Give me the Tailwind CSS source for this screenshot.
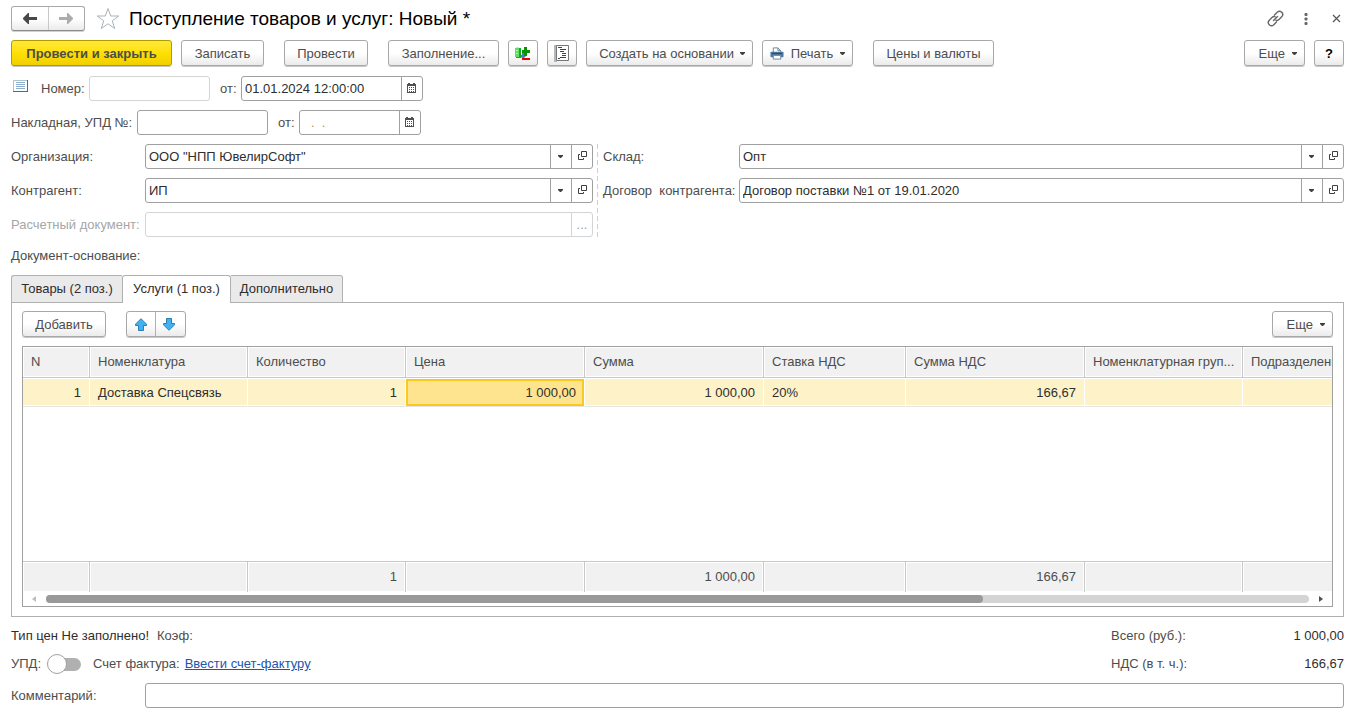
<!DOCTYPE html>
<html lang="ru">
<head>
<meta charset="utf-8">
<meta name="viewport" content="width=device-width, initial-scale=1">
<title>Поступление товаров и услуг: Новый *</title>
<script src="https://cdn.jsdelivr.net/npm/@tailwindcss/browser@4"></script>
</head>
<body class="bg-white font-['Liberation_Sans',Arial,sans-serif] text-[13px] leading-5 text-[#4d4d4d]">
<svg class="hidden" aria-hidden="true">
  <symbol id="caret" viewBox="0 0 5 3"><path d="M0 0h5v1L3 3H2L0 1z" fill="#404040"/></symbol>
  <symbol id="open" viewBox="0 0 9 9"><path d="M3.500.5h5v5h-5zM2 3.500H.5v5h5V7" fill="none" stroke="#404040"/></symbol>
  <symbol id="calendar" viewBox="0 0 9 10"><path d="M1 0h2v1h3V0h2v1h1v9H0V1h1z" fill="#505050"/><path d="M1 3h7v6H1z" fill="#fff"/><path d="M2 4h1v1H2zM4 4h1v1H4zM6 4h1v1H6zM2 6h1v1H2zM4 6h1v1H4zM6 6h1v1H6zM2 8h1v1H2zM4 8h1v1H4zM6 8h1v1H6z" fill="#505050"/></symbol>
</svg>
<main class="flex min-h-screen flex-col gap-[9px] pt-[6px] pr-[17px] pb-[10px] pl-[11px]">
  <header class="flex h-[25px] items-center">
    <div class="flex h-[25px] w-[74px] rounded-[3px] border border-[#a8a8a8] border-b-[#8c8c8c] bg-linear-to-b from-white from-50% to-[#ebebeb] shadow-[0_1px_0_#d0d0d0]">
      <button type="button" aria-label="Назад" class="flex flex-1 items-center justify-center border-r border-[#c8c8c8]"><svg width="14" height="11" viewBox="0 0 14 11"><path d="M6 0v4h8v3H6v4H5L0 6V5l5-5z" fill="#484848"/></svg></button>
      <button type="button" aria-label="Вперед" class="flex flex-1 items-center justify-center"><svg width="14" height="11" viewBox="0 0 14 11"><path d="M8 0v4H0v3h8v4h1l5-5V5L9 0z" fill="#acacac"/></svg></button>
    </div>
    <button type="button" aria-label="В избранное" class="ml-[11px]"><svg width="24" height="23" viewBox="0 0 24 23"><path d="M12 1.500l2.700 7.500h8l-6.400 4.800 2.400 7.700-6.700-4.700-6.700 4.700 2.400-7.700L1.300 9h8z" fill="#fff" stroke="#a9b1b8"/></svg></button>
    <h1 class="ml-[9px] flex-1 truncate text-[19px] leading-6 text-black">Поступление товаров и услуг: Новый *</h1>
    <div class="flex items-center pr-[3px]">
      <button type="button" aria-label="Ссылка"><svg width="17" height="17" viewBox="0 0 17 17" fill="none" stroke="#666" stroke-width="1.400" stroke-linecap="round"><path d="M7.500 5l2.700-2.700a3.100 3.100 0 0 1 4.500 4.500L12 9.500a3 3 0 0 1-3 .8M9.500 12L6.800 14.700a3.100 3.100 0 0 1-4.500-4.500L5 7.500a3 3 0 0 1 3-.8M6.500 10.500l4-4"/></svg></button>
      <button type="button" aria-label="Меню" class="ml-[20px]"><svg width="4" height="12" viewBox="0 0 4 12" fill="#666"><rect x=".5" y="0" width="3" height="3" rx="1"/><rect x=".5" y="4.500" width="3" height="3" rx="1"/><rect x=".5" y="9" width="3" height="3" rx="1"/></svg></button>
      <button type="button" aria-label="Закрыть" class="ml-[24px]"><svg width="9" height="9" viewBox="0 0 9 9"><path d="M1 1l7 7M8 1L1 8" stroke="#555" stroke-width="1.200"/></svg></button>
    </div>
  </header>

  <div role="toolbar" class="flex h-[27px] items-start whitespace-nowrap *:h-[26px] *:shrink-0 *:rounded-[3px] *:border *:pt-px *:shadow-[0_1px_0_#c8c8c8]">
    <button type="button" class="w-[161px] border-[#b09b00] bg-linear-to-b from-[#ffe935] via-[#ffe000] to-[#f0cf00] font-bold">Провести и закрыть</button>
    <button type="button" class="ml-[9px] w-[83px] border-[#a8a8a8] bg-linear-to-b from-white from-50% to-[#ebebeb]">Записать</button>
    <button type="button" class="ml-[20px] w-[84px] border-[#a8a8a8] bg-linear-to-b from-white from-50% to-[#ebebeb]">Провести</button>
    <button type="button" class="ml-[20px] w-[111px] border-[#a8a8a8] bg-linear-to-b from-white from-50% to-[#ebebeb]">Заполнение...</button>
    <button type="button" aria-label="Изменить строки" class="ml-[9px] flex w-[30px] items-center justify-center border-[#a8a8a8] bg-linear-to-b from-white from-50% to-[#ebebeb]"><svg width="16" height="16" viewBox="0 0 16 16"><path d="M0 2h5v9H0z" fill="#62df62"/><path d="M1 1h3v1H1zM1 4h2v1H1zM1 7h2v1H1z" fill="#b5f5b5"/><path d="M4 2h2v10H1v-1h3z" fill="#12a92c"/><path d="M9 1h3v3h3v3h-3v3H9V7H7V4h2z" fill="#079407"/><path d="M7 7v2H6v2l2 2 3-3H9V7z" fill="#3c83c4"/><path d="M7 12h8v2H7z" fill="#f00000"/></svg></button>
    <button type="button" aria-label="Журнал проводок" class="ml-[9px] flex w-[30px] items-center justify-center border-[#a8a8a8] bg-linear-to-b from-white from-50% to-[#ebebeb]"><svg width="16" height="17" viewBox="0 0 16 17"><path d="M0 0h3v17H0z" fill="#b8b8b8"/><path d="M2.500.5h12v15h-12z" fill="#fff" stroke="#777"/><path d="M4 2h4v1H4zM6 4h6v1H6zM6 6h4v1H6zM8 8h4v1H8zM8 10h4v1H8zM6 12h6v1H6zM4 13h2v1H4z" fill="#244e68"/></svg></button>
    <button type="button" class="ml-[9px] flex w-[167px] items-center justify-end border-[#a8a8a8] bg-linear-to-b from-white from-50% to-[#ebebeb] pr-[7px]">Создать на основании<svg class="ml-[6px]" width="5" height="3"><use href="#caret"/></svg></button>
    <button type="button" class="ml-[9px] flex w-[91px] items-center border-[#a8a8a8] bg-linear-to-b from-white from-50% to-[#ebebeb] px-[7px]"><svg width="14" height="15" viewBox="0 0 15 15"><path d="M3.500 6V1.500h5l3 3V6" fill="#fff" stroke="#66829c"/><path d="M8.500 1.500v3h3" fill="none" stroke="#66829c"/><rect x=".5" y="5.500" width="14" height="6" rx="1" fill="#4f779c"/><path d="M2 7h11v1H2z" fill="#244a6b"/><path d="M3.500 9.500h8v4h-8z" fill="#fff" stroke="#66829c"/></svg><span class="flex-1 text-center">Печать</span><svg width="5" height="3"><use href="#caret"/></svg></button>
    <button type="button" class="ml-[20px] w-[121px] border-[#a8a8a8] bg-linear-to-b from-white from-50% to-[#ebebeb]">Цены и валюты</button>
    <button type="button" class="ml-auto flex w-[61px] items-center justify-end border-[#a8a8a8] bg-linear-to-b from-white from-50% to-[#ebebeb] pr-[7px]">Еще<svg class="ml-[7px]" width="5" height="3"><use href="#caret"/></svg></button>
    <button type="button" aria-label="Справка" class="ml-[9px] w-[30px] border-[#a8a8a8] bg-linear-to-b from-white from-50% to-[#ebebeb] font-bold text-black">?</button>
  </div>

  <div class="flex h-[25px] items-center">
    <svg class="mb-[6px] ml-[2px]" width="16" height="12" viewBox="0 0 16 12"><path d="M.5.500h14v11H.5z" fill="#fff" stroke="#a9c3d0"/><path d="M14 0h1v12H0v-1h14z" fill="#46736f"/><path d="M3 2h9v1H3zM3 4h9v1H3zM3 6h9v1H3zM3 8h9v1H3z" fill="#8eaed0"/></svg>
    <label for="number" class="ml-[12px] w-[48px]">Номер:</label>
    <input id="number" type="text" class="h-[25px] w-[121px] rounded-[3px] border border-[#d4d4d4] px-[3px] outline-none">
    <label for="date" class="ml-[10px] w-[21px]">от:</label>
    <div class="flex h-[25px] w-[182px] rounded-[3px] border border-[#a0a0a0]">
      <input id="date" type="text" value="01.01.2024 12:00:00" class="min-w-0 flex-1 px-[3px] text-[#2e2e2e] outline-none">
      <button type="button" aria-label="Выбрать дату" class="flex w-[21px] items-center justify-center border-l border-[#a0a0a0] pr-px pb-[2px]"><svg width="9" height="10"><use href="#calendar"/></svg></button>
    </div>
  </div>

  <div class="flex h-[25px] items-center">
    <label for="invoice" class="w-[126px] whitespace-nowrap">Накладная, УПД №:</label>
    <input id="invoice" type="text" class="h-[25px] w-[131px] rounded-[3px] border border-[#a0a0a0] px-[3px] outline-none">
    <label for="invoice-date" class="ml-[10px] w-[21px]">от:</label>
    <div class="flex h-[25px] w-[122px] rounded-[3px] border border-[#a0a0a0]">
      <input id="invoice-date" type="text" value=".  ." class="min-w-0 flex-1 pl-[11px] text-[#c98a4b] outline-none">
      <button type="button" aria-label="Выбрать дату накладной" class="flex w-[21px] items-center justify-center border-l border-[#a0a0a0] pr-px pb-[2px]"><svg width="9" height="10"><use href="#calendar"/></svg></button>
    </div>
  </div>

  <div class="grid grid-cols-[134px_448fr_10px_136px_605fr] items-center gap-y-[9px]">
    <label for="org">Организация:</label>
    <div class="flex h-[25px] min-w-0 rounded-[3px] border border-[#a0a0a0]">
      <div class="relative min-w-0 flex-1">
        <select id="org" class="h-full w-full appearance-none pr-[24px] pl-[3px] text-[#2e2e2e] outline-none"><option>ООО "НПП ЮвелирСофт"</option></select>
        <span class="pointer-events-none absolute inset-y-0 right-0 flex w-[21px] items-center justify-center border-l border-[#a0a0a0] pr-px"><svg width="5" height="3"><use href="#caret"/></svg></span>
      </div>
      <button type="button" aria-label="Открыть организацию" class="flex w-[21px] items-center justify-center border-l border-[#a0a0a0] pb-[2px]"><svg width="9" height="9"><use href="#open"/></svg></button>
    </div>
    <div class="col-start-3 row-span-3 row-start-1 ml-[4px] h-full w-px bg-[repeating-linear-gradient(to_bottom,#cfcfcf_0_5px,transparent_5px_8px)]"></div>
    <label for="store">Склад:</label>
    <div class="flex h-[25px] min-w-0 rounded-[3px] border border-[#a0a0a0]">
      <div class="relative min-w-0 flex-1">
        <select id="store" class="h-full w-full appearance-none pr-[24px] pl-[3px] text-[#2e2e2e] outline-none"><option>Опт</option></select>
        <span class="pointer-events-none absolute inset-y-0 right-0 flex w-[21px] items-center justify-center border-l border-[#a0a0a0] pr-px"><svg width="5" height="3"><use href="#caret"/></svg></span>
      </div>
      <button type="button" aria-label="Открыть склад" class="flex w-[21px] items-center justify-center border-l border-[#a0a0a0] pb-[2px]"><svg width="9" height="9"><use href="#open"/></svg></button>
    </div>

    <label for="partner">Контрагент:</label>
    <div class="flex h-[25px] min-w-0 rounded-[3px] border border-[#a0a0a0]">
      <div class="relative min-w-0 flex-1">
        <select id="partner" class="h-full w-full appearance-none pr-[24px] pl-[3px] text-[#2e2e2e] outline-none"><option>ИП</option></select>
        <span class="pointer-events-none absolute inset-y-0 right-0 flex w-[21px] items-center justify-center border-l border-[#a0a0a0] pr-px"><svg width="5" height="3"><use href="#caret"/></svg></span>
      </div>
      <button type="button" aria-label="Открыть контрагента" class="flex w-[21px] items-center justify-center border-l border-[#a0a0a0] pb-[2px]"><svg width="9" height="9"><use href="#open"/></svg></button>
    </div>
    <label for="contract" class="whitespace-nowrap">Договор&nbsp; контрагента:</label>
    <div class="flex h-[25px] min-w-0 rounded-[3px] border border-[#a0a0a0]">
      <div class="relative min-w-0 flex-1">
        <select id="contract" class="h-full w-full appearance-none pr-[24px] pl-[3px] text-[#2e2e2e] outline-none"><option>Договор поставки №1 от 19.01.2020</option></select>
        <span class="pointer-events-none absolute inset-y-0 right-0 flex w-[21px] items-center justify-center border-l border-[#a0a0a0] pr-px"><svg width="5" height="3"><use href="#caret"/></svg></span>
      </div>
      <button type="button" aria-label="Открыть договор" class="flex w-[21px] items-center justify-center border-l border-[#a0a0a0] pb-[2px]"><svg width="9" height="9"><use href="#open"/></svg></button>
    </div>

    <label for="payment-doc" class="whitespace-nowrap text-[#a6a6a6]">Расчетный документ:</label>
    <div class="flex h-[25px] min-w-0 rounded-[3px] border border-[#d4d4d4]">
      <input id="payment-doc" type="text" disabled class="min-w-0 flex-1 px-[3px]">
      <button type="button" disabled aria-label="Выбрать расчетный документ" class="w-[21px] border-l border-[#d4d4d4] text-[#a0a0a0]">...</button>
    </div>
  </div>

  <div>Документ-основание:</div>

  <section class="flex flex-1 flex-col">
    <div role="tablist" class="z-10 -mb-px flex h-[28px] whitespace-nowrap text-[#2e2e2e]">
      <button type="button" role="tab" aria-selected="false" class="w-[111px] rounded-tl-[3px] border border-r-0 border-[#b0b0b0] bg-[#eaeaea]">Товары (2 поз.)</button>
      <button type="button" role="tab" aria-selected="true" class="w-[109px] rounded-t-[3px] border border-b-0 border-[#b0b0b0] bg-white pb-px">Услуги (1 поз.)</button>
      <button type="button" role="tab" aria-selected="false" class="w-[112px] rounded-tr-[3px] border border-l-0 border-[#b0b0b0] bg-[#eaeaea]">Дополнительно</button>
    </div>
    <div role="tabpanel" class="flex flex-1 flex-col gap-[8px] border border-[#b0b0b0] px-[10px] pt-[8px] pb-[9px]">
      <div class="flex h-[27px] items-start">
        <button type="button" class="h-[26px] w-[84px] rounded-[3px] border border-[#a8a8a8] bg-linear-to-b from-white from-50% to-[#ebebeb] pt-px shadow-[0_1px_0_#c8c8c8]">Добавить</button>
        <div class="ml-[20px] flex h-[26px] w-[60px] rounded-[3px] border border-[#a8a8a8] bg-linear-to-b from-white from-50% to-[#ebebeb] shadow-[0_1px_0_#c8c8c8]">
          <button type="button" aria-label="Переместить вверх" class="flex flex-1 items-center justify-center border-r border-[#b0b0b0]"><svg width="12" height="13" viewBox="0 0 12 13"><path d="M6 .7L11.500 6.200v1.300H8.500v5h-5v-5H.5V6.200z" fill="#43b0f0" stroke="#2b7db5" stroke-linejoin="round"/></svg></button>
          <button type="button" aria-label="Переместить вниз" class="flex flex-1 items-center justify-center pr-[2px]"><svg width="12" height="13" viewBox="0 0 12 13"><path d="M6 12.300L.5 6.800V5.500h3v-5h5v5h3v1.300z" fill="#43b0f0" stroke="#2b7db5" stroke-linejoin="round"/></svg></button>
        </div>
        <button type="button" class="ml-auto flex h-[26px] w-[61px] items-center justify-end rounded-[3px] border border-[#a8a8a8] bg-linear-to-b from-white from-50% to-[#ebebeb] pt-px pr-[7px] shadow-[0_1px_0_#c8c8c8]">Еще<svg class="ml-[7px]" width="5" height="3"><use href="#caret"/></svg></button>
      </div>
      <div class="flex flex-1 flex-col border border-[#a0a0a0]">
        <div class="grid flex-1 overflow-hidden">
          <table class="h-full w-[1379px] table-fixed border-separate border-spacing-0 text-left">
            <colgroup><col class="w-[67px]"><col class="w-[158px]"><col class="w-[158px]"><col class="w-[179px]"><col class="w-[179px]"><col class="w-[142px]"><col class="w-[179px]"><col class="w-[158px]"><col class="w-[159px]"></colgroup>
            <thead>
              <tr class="h-[31px] *:truncate *:border-r *:border-b *:border-[#c8c8c8] *:bg-[#f1f1f1] *:pr-[2px] *:pl-[8px] *:font-normal *:shadow-[inset_0_0_0_1px_#fff]">
                <th scope="col">N</th><th scope="col">Номенклатура</th><th scope="col">Количество</th><th scope="col">Цена</th><th scope="col">Сумма</th><th scope="col">Ставка НДС</th><th scope="col">Сумма НДС</th><th scope="col">Номенклатурная груп...</th><th scope="col">Подразделение</th>
              </tr>
            </thead>
            <tbody>
              <tr class="h-[29px] text-[#2e2e2e] *:border-t *:border-r *:border-b *:border-t-white *:border-r-white *:border-b-[#e4e4e4] *:bg-[#fdf2c8] *:px-[8px] *:shadow-[inset_0_-1px_0_#fff]">
                <td class="text-right">1</td><td>Доставка Спецсвязь</td><td class="text-right">1</td>
                <td><div class="-mx-[8px] flex h-[27px] items-center justify-end border-2 border-[#fcc820] bg-[#ffe48f] pr-[6px]">1 000,00</div></td>
                <td class="text-right">1 000,00</td><td>20%</td><td class="text-right">166,67</td><td></td><td></td>
              </tr>
              <tr><td colspan="9"></td></tr>
            </tbody>
            <tfoot>
              <tr class="h-[31px] text-right *:border-t *:border-r *:border-[#c8c8c8] *:bg-[#f1f1f1] *:px-[8px] *:shadow-[inset_0_0_0_1px_#fff]">
                <td></td><td></td><td>1</td><td></td><td>1 000,00</td><td></td><td>166,67</td><td></td><td></td>
              </tr>
            </tfoot>
          </table>
        </div>
        <div class="flex h-[14px] items-center pr-[9px] pl-[9px]">
          <svg width="4" height="6" viewBox="0 0 4 6"><path d="M4 0v6L0 3z" fill="#bdbdbd"/></svg>
          <div class="mx-[10px] h-[8px] flex-1 rounded-full bg-[#d4d4d4]"><div class="h-full rounded-full bg-[#999]" style="width:74.2%"></div></div>
          <svg width="4" height="6" viewBox="0 0 4 6"><path d="M0 0v6l4-3z" fill="#505050"/></svg>
        </div>
      </div>
    </div>
  </section>

  <div class="flex h-[19px] items-center">
    <span class="text-[#2e2e2e]">Тип цен Не заполнено!</span>
    <span class="ml-[8px]">Коэф:</span>
    <span class="ml-auto w-[150px]">Всего (руб.):</span>
    <span class="w-[83px] text-right text-[#2e2e2e]">1 000,00</span>
  </div>
  <div class="flex h-[20px] items-center">
    <label for="upd" class="w-[36px]">УПД:</label>
    <span class="relative flex h-[20px] w-[34px] items-center">
      <input id="upd" type="checkbox" role="switch" class="peer ml-[6px] h-[13px] w-[28px] appearance-none rounded-full bg-[#b0b0b0]">
      <span class="pointer-events-none absolute top-0 left-0 size-[20px] rounded-full border border-[#a0a0a0] bg-white peer-checked:left-[14px]"></span>
    </span>
    <span class="ml-[12px]">Счет фактура:</span>
    <a href="#" class="ml-[5px] text-[#1c55ae] underline">Ввести счет-фактуру</a>
    <span class="ml-auto w-[150px]">НДС (в т. ч.):</span>
    <span class="w-[83px] text-right text-[#2e2e2e]">166,67</span>
  </div>
  <div class="flex h-[25px] items-center">
    <label for="comment" class="w-[134px]">Комментарий:</label>
    <input id="comment" type="text" class="h-[25px] min-w-0 flex-1 rounded-[3px] border border-[#a0a0a0] px-[3px] outline-none">
  </div>
</main>
</body>
</html>
